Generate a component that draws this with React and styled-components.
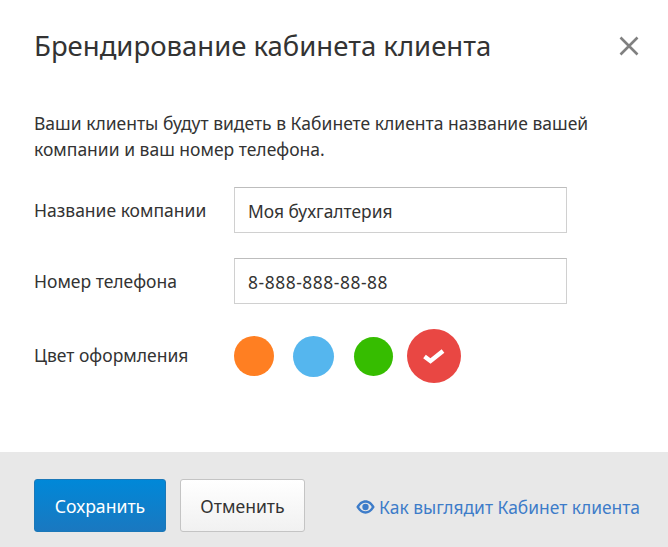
import React from 'react';
import styled, { createGlobalStyle } from 'styled-components';

const GlobalStyle = createGlobalStyle`
  html, body { margin: 0; padding: 0; background: #fff; }
  body { font-family: "Noto Sans", "Open Sans", "Liberation Sans", sans-serif; color: #333; }
`;

const swatches = [
  { color: '#ff7f22', size: 40, gap: 0 },
  { color: '#55b6ee', size: 41, gap: 19 },
  { color: '#36bd00', size: 39, gap: 20 },
  { color: '#e94743', size: 54, gap: 14, checked: true },
];

export default function App() {
  return (
    <>
      <GlobalStyle />
      <Dialog>
        <Header>
          <Title>Брендирование кабинета клиента</Title>
          <Close aria-label="close">
            <svg width="20" height="20" viewBox="0 0 20 20">
              <path d="M1.5 1.5 L18.5 18.5 M18.5 1.5 L1.5 18.5" stroke="#808080" strokeWidth="2.6" fill="none" />
            </svg>
          </Close>
        </Header>
        <Body>
          <Intro>
            Ваши клиенты будут видеть в Кабинете клиента название вашей
            компании и ваш номер телефона.
          </Intro>
          <Row>
            <Label>Название компании</Label>
            <Field readOnly value="Моя бухгалтерия" />
          </Row>
          <Row>
            <Label>Номер телефона</Label>
            <Field readOnly value="8-888-888-88-88" $spacing={0.55} />
          </Row>
          <ColorRow>
            <ColorLabel>Цвет оформления</ColorLabel>
            <Swatches>
              {swatches.map((s) => (
                <Swatch key={s.color} $color={s.color} $size={s.size} $gap={s.gap}>
                  {s.checked && (
                    <svg width="22" height="16" viewBox="0 0 22 16">
                      <path d="M1.5 8.5 L7.5 13 L20 3" stroke="#fff" strokeWidth="4.4" fill="none" />
                    </svg>
                  )}
                </Swatch>
              ))}
            </Swatches>
          </ColorRow>
        </Body>
        <Footer>
          <PrimaryButton>Сохранить</PrimaryButton>
          <CancelButton>Отменить</CancelButton>
          <PreviewLink>
            <svg width="19" height="14" viewBox="0 0 19 14">
              <path d="M0.3 7 C3 2.3 6 0.3 9.5 0.3 C13 0.3 16 2.3 18.7 7 C16 11.7 13 13.7 9.5 13.7 C6 13.7 3 11.7 0.3 7 Z M3.2 7 C4.9 9.8 7 11.2 9.5 11.2 C12 11.2 14.1 9.8 15.8 7 C14.1 4.2 12 2.8 9.5 2.8 C7 2.8 4.9 4.2 3.2 7 Z" fill="#3d7cc9" fillRule="evenodd" />
              <circle cx="9.5" cy="7" r="3.2" fill="#3d7cc9" />
            </svg>
            Как выглядит Кабинет клиента
          </PreviewLink>
        </Footer>
      </Dialog>
    </>
  );
}

const Dialog = styled.div`
  display: flex;
  flex-direction: column;
  width: 668px;
  height: 547px;
  overflow: hidden;
`;
const Header = styled.div`
  display: flex;
  align-items: center;
  justify-content: space-between;
  padding: 27px 29px 0 34px;
  height: 37px;
`;
const Title = styled.h1`
  margin: 0;
  font-size: 27.5px;
  font-weight: 400;
  line-height: 37px;
  color: #333;
`;
const Close = styled.div`
  display: flex;
  width: 20px;
  height: 20px;
`;
const Body = styled.div`
  flex: 1;
  padding: 46px 0 0 34px;
`;
const Intro = styled.p`
  margin: 0 0 25px;
  width: 590px;
  font-size: 17.5px;
  line-height: 26px;
`;
const Row = styled.div`
  display: flex;
  align-items: center;
  height: 46px;
  margin-bottom: 25px;
`;
const Label = styled.div`
  width: 200px;
  font-size: 17.5px;
`;
const Field = styled.input`
  box-sizing: border-box;
  width: 333px;
  height: 46px;
  padding: 1px 13px 0;
  border: 1px solid #d0d0d0;
  border-top-color: #bdbdbd;
  border-radius: 0;
  outline: none;
  font-family: inherit;
  font-size: 17.4px;
  letter-spacing: ${(p) => p.$spacing || 0}px;
  color: #333;
`;
const ColorRow = styled.div`
  display: flex;
  align-items: center;
  height: 54px;
  margin-top: 1px;
`;
const ColorLabel = styled(Label)`
  margin-bottom: 3px;
`;
const Swatches = styled.div`
  display: flex;
  align-items: center;
`;
const Swatch = styled.div`
  display: flex;
  align-items: center;
  justify-content: center;
  flex: none;
  width: ${(p) => p.$size}px;
  height: ${(p) => p.$size}px;
  margin-left: ${(p) => p.$gap}px;
  border-radius: 50%;
  background: ${(p) => p.$color};
`;
const Footer = styled.div`
  display: flex;
  align-items: center;
  height: 95px;
  padding: 0 28px 0 34px;
  background: #e8e8e8;
`;
const Button = styled.button`
  box-sizing: border-box;
  height: 53px;
  margin-top: 12px;
  padding: 0;
  border-radius: 3px;
  font-family: inherit;
  font-size: 17.6px;
`;
const PrimaryButton = styled(Button)`
  width: 132px;
  margin-right: 14px;
  border: 1px solid #1b78b8;
  background: linear-gradient(#0088d8, #1a78c0);
  color: #fff;
`;
const CancelButton = styled(Button)`
  width: 125px;
  border: 1px solid #c4c4c4;
  background: linear-gradient(#fff, #f1f1f1);
  color: #333;
`;
const PreviewLink = styled.a`
  display: flex;
  align-items: center;
  gap: 4px;
  margin-left: auto;
  margin-top: 14px;
  font-size: 17.4px;
  color: #3d7cc9;
  white-space: nowrap;
`;
